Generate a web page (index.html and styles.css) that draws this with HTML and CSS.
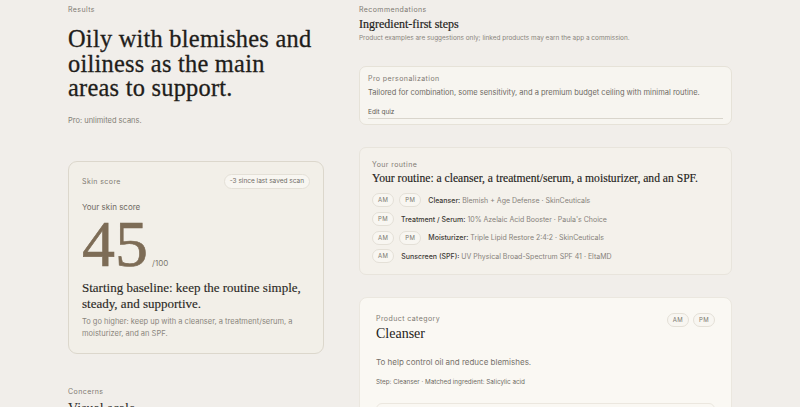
FILE: index.html
```html
<!DOCTYPE html>
<html>
<head>
 <link rel="stylesheet" href="styles.css">
</head>
<body>
<div class="page">
  <div class="leftcol">
    <div class="eyebrow">Results</div>
    <h1 class="headline">Oily with blemishes and oiliness as the main areas to support.</h1>
    <p class="note">Pro: unlimited scans.</p>

    <div class="scorecard">
      <div class="cardtop">
        <span class="eyebrow">Skin score</span>
        <span class="pill wide">-3 since last saved scan</span>
      </div>
      <div class="scorelabel">Your skin score</div>
      <div class="scorerow">
        <span class="bignum">45</span>
        <span class="outof">/100</span>
      </div>
      <h3 class="baseline">Starting baseline: keep the routine simple, steady, and supportive.</h3>
      <p class="gohigher">To go higher: keep up with a cleanser, a treatment/serum, a moisturizer, and an SPF.</p>
    </div>

    <div class="concerns">
      <div class="eyebrow">Concerns</div>
      <h3 class="subhead">Visual scale</h3>
    </div>
  </div>

  <div class="rightcol">
    <div class="eyebrow">Recommendations</div>
    <h2 class="sectiontitle">Ingredient-first steps</h2>
    <p class="disclaimer">Product examples are suggestions only; linked products may earn the app a commission.</p>

    <div class="procard">
      <div class="eyebrow">Pro personalization</div>
      <p class="protext">Tailored for combination, some sensitivity, and a premium budget ceiling with minimal routine.</p>
      <div class="editrow">Edit quiz</div>
    </div>

    <div class="routinecard">
      <div class="eyebrow">Your routine</div>
      <h3 class="routinetitle">Your routine: a cleanser, a treatment/serum, a moisturizer, and an SPF.</h3>
      <ul class="steps">
        <li><span class="pill">AM</span><span class="pill">PM</span><span class="step"><b>Cleanser:</b> Blemish + Age Defense · SkinCeuticals</span></li>
        <li><span class="pill">PM</span><span class="step"><b>Treatment / Serum:</b> 10% Azelaic Acid Booster · Paula's Choice</span></li>
        <li><span class="pill">AM</span><span class="pill">PM</span><span class="step"><b>Moisturizer:</b> Triple Lipid Restore 2:4:2 · SkinCeuticals</span></li>
        <li><span class="pill">AM</span><span class="step"><b>Sunscreen (SPF):</b> UV Physical Broad-Spectrum SPF 41 · EltaMD</span></li>
      </ul>
    </div>

    <div class="productcard">
      <div class="producthead">
        <div>
          <div class="eyebrow">Product category</div>
          <h3 class="producttitle">Cleanser</h3>
        </div>
        <div class="pills"><span class="pill">AM</span><span class="pill">PM</span></div>
      </div>
      <p class="productwhy">To help control oil and reduce blemishes.</p>
      <p class="productmeta">Step: Cleanser · Matched ingredient: Salicylic acid</p>
      <div class="innercard"></div>
    </div>
  </div>
</div>
</body>
</html>
```

FILE: styles.css
```css
body {
  margin: 0;
  background: #f1eeea;
  font-family: Inter, "Noto Sans", sans-serif;
  color: #2b2925;
  height: 407px;
  overflow: hidden;
}
p, h1, h2, h3, ul {
  margin: 0;
}

.page {
  display: grid;
  grid-template-columns: 256px 373px;
  column-gap: 35px;
  width: 664px;
  margin: 0 auto;
  padding-top: 5px;
}

.eyebrow {
  font-size: 7px;
  letter-spacing: 0.06em;
  color: #7f7a72;
  line-height: 9px;
}

/* left column */
.headline {
  font-family: "Liberation Serif", serif;
  font-weight: 400;
  font-size: 24.4px;
  line-height: 24.5px;
  color: #1f1d1a;
  margin-top: 13px;
  max-width: 248px;
  letter-spacing: 0.01em;
  -webkit-text-stroke: 0.3px #1f1d1a;
}
.note {
  font-size: 7.5px;
  color: #837e76;
  margin-top: 15px;
}

.scorecard {
  margin-top: 36px;
  background: #f2efe8;
  border: 1px solid #dcd7cc;
  border-radius: 9px;
  padding: 12px 13px 12px 13px;
}
.cardtop {
  display: flex;
  justify-content: space-between;
  align-items: center;
}
.pill {
  display: inline-block;
  border: 1px solid #e4e0d7;
  background: #f8f6f1;
  border-radius: 10px;
  font-size: 6px;
  letter-spacing: 0.06em;
  color: #7b776f;
  line-height: 12px;
  padding: 0 5px;
}
.pill.wide {
  font-size: 6.5px;
  letter-spacing: 0;
  line-height: 13px;
  padding: 0 5px;
  color: #6f6b64;
}
.scorelabel {
  font-size: 8px;
  line-height: 10px;
  color: #6f6a62;
  margin-top: 13px;
}
.scorerow {
  display: flex;
  align-items: baseline;
  margin-top: 7px;
}
.bignum {
  font-family: "Liberation Serif", serif;
  font-size: 66px;
  line-height: 50px;
  color: #7d6c56;
  -webkit-text-stroke: 0.6px #7d6c56;
}
.outof {
  font-size: 8px;
  color: #7d786f;
  margin-left: 4px;
}
.baseline {
  font-family: "Liberation Serif", serif;
  font-weight: 400;
  font-size: 13px;
  line-height: 16px;
  color: #2b2925;
  margin-top: 11px;
  -webkit-text-stroke: 0.15px #2b2925;
}
.gohigher {
  font-size: 7.5px;
  line-height: 12.5px;
  color: #8a857c;
  margin-top: 4px;
}

.concerns {
  margin-top: 33px;
}
.subhead {
  font-family: "Liberation Serif", serif;
  font-weight: 400;
  font-size: 14px;
  margin-top: 5px;
}

/* right column */
.sectiontitle {
  font-family: "Liberation Serif", serif;
  font-weight: 400;
  font-size: 12px;
  line-height: 16px;
  color: #1f1d1a;
  margin-top: 2px;
  -webkit-text-stroke: 0.2px #1f1d1a;
}
.disclaimer {
  font-size: 6.45px;
  color: #8a857d;
  margin-top: 2px;
}

.procard {
  margin-top: 24px;
  background: #f7f5f0;
  border: 1px solid #e6e2d8;
  border-radius: 7px;
  padding: 7px 8px 5px 8px;
}
.protext {
  font-size: 7.5px;
  color: #6e6a63;
  margin-top: 5px;
}
.editrow {
  font-size: 6.5px;
  color: #5e5a54;
  margin-top: 11px;
  padding-bottom: 2px;
  border-bottom: 1px solid #d9d5cc;
}

.routinecard {
  margin-top: 22px;
  background: #f4f1eb;
  border: 1px solid #e8e4dc;
  border-radius: 7px;
  padding: 12px 12px 8px 12px;
}
.routinetitle {
  font-family: "Liberation Serif", serif;
  font-weight: 400;
  font-size: 11.6px;
  line-height: 16px;
  margin-top: 2px;
  color: #1f1d1a;
  -webkit-text-stroke: 0.15px #1f1d1a;
}
.steps {
  list-style: none;
  padding: 0;
  margin-top: 4px;
}
.steps li {
  display: flex;
  align-items: center;
  gap: 5px;
  height: 18.7px;
}
.step {
  font-size: 7px;
  color: #86817a;
  margin-left: 2px;
}
.step b {
  font-weight: 500;
  color: #3d3a35;
}

.productcard {
  margin-top: 22px;
  background: #faf8f3;
  border: 1px solid #ebe7df;
  border-radius: 8px;
  padding: 16px 16px 0 16px;
  height: 200px;
}
.producthead {
  display: flex;
  justify-content: space-between;
  align-items: flex-start;
}
.pills {
  display: flex;
  gap: 4px;
  margin-top: -1px;
}
.producttitle {
  font-family: "Liberation Serif", serif;
  font-weight: 400;
  font-size: 14px;
  line-height: 18px;
  color: #1f1d1a;
  margin-top: 2px;
}
.productwhy {
  font-size: 8px;
  color: #77726b;
  margin-top: 14px;
}
.productmeta {
  font-size: 6.3px;
  color: #6e6a63;
  margin-top: 11px;
}
.innercard {
  margin-top: 17px;
  height: 40px;
  border: 1px solid #ebe7df;
  border-radius: 6px;
}
```
